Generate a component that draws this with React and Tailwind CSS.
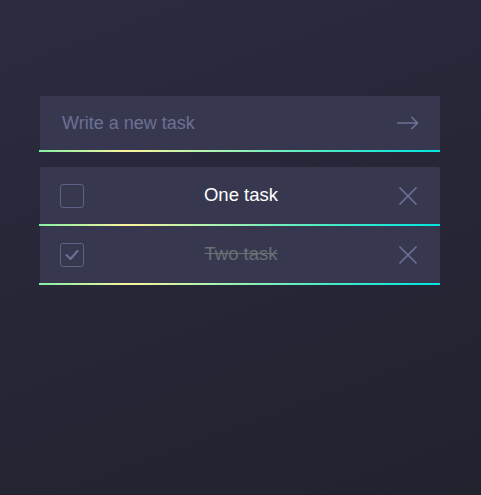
import React from "react";

const Line = () => (
  <div className="h-[2px] -ml-px w-[401px] bg-[linear-gradient(to_right,#86f0a8_0%,#fbf59c_22%,#a6f3b0_45%,#48ebc6_72%,#00e4e0_100%)]" />
);

const XIcon = () => (
  <svg width="20" height="20" viewBox="0 0 20 20" fill="none" stroke="#6f7096" strokeWidth="1.6">
    <path d="M1.5 1.5 L18.5 18.5 M18.5 1.5 L1.5 18.5" />
  </svg>
);

const Row = ({ text, done }) => (
  <div>
    <div className="h-[57px] bg-[#373850] rounded-t-[2px] flex items-center pl-[20px] pr-[22px]">
      <div className="w-[24px] h-[24px] rounded-[3px] border-[1.8px] border-[#5f6187] flex items-center justify-center">
        {done && (
          <svg width="14" height="12" viewBox="0 0 14 12" fill="none" stroke="#6f7096" strokeWidth="2" strokeLinecap="round" strokeLinejoin="round">
            <path d="M1.5 6 L5.5 10 L12.5 2" />
          </svg>
        )}
      </div>
      <div
        className={
          "flex-1 text-center text-[18.5px] -mt-[2px] " +
          (done ? "text-[#687073] line-through" : "text-white")
        }
      >
        {text}
      </div>
      <XIcon />
    </div>
    <Line />
  </div>
);

export default function App() {
  return (
    <div
      className="w-[481px] h-[495px] bg-[linear-gradient(160deg,#2c2c40_0%,#262637_50%,#22222f_100%)] pt-[96px] pl-[40px]"
      style={{ fontFamily: '"Liberation Sans", Arial, sans-serif' }}
    >
      <div className="w-[400px]">
        <div>
          <div className="h-[54px] bg-[#373850] rounded-t-[2px] flex items-center pl-[22px] pr-[21px]">
            <div className="flex-1 text-[18px] text-[#6d6f93]">Write a new task</div>
            <svg width="22" height="14" viewBox="0 0 22 14" fill="none" stroke="#6f7096" strokeWidth="1.6">
              <path d="M0 7 H20.5 M14.5 1 L20.5 7 L14.5 13" />
            </svg>
          </div>
          <Line />
        </div>
        <div className="mt-[15px]">
          <Row text="One task" />
          <Row text="Two task" done />
        </div>
      </div>
    </div>
  );
}
